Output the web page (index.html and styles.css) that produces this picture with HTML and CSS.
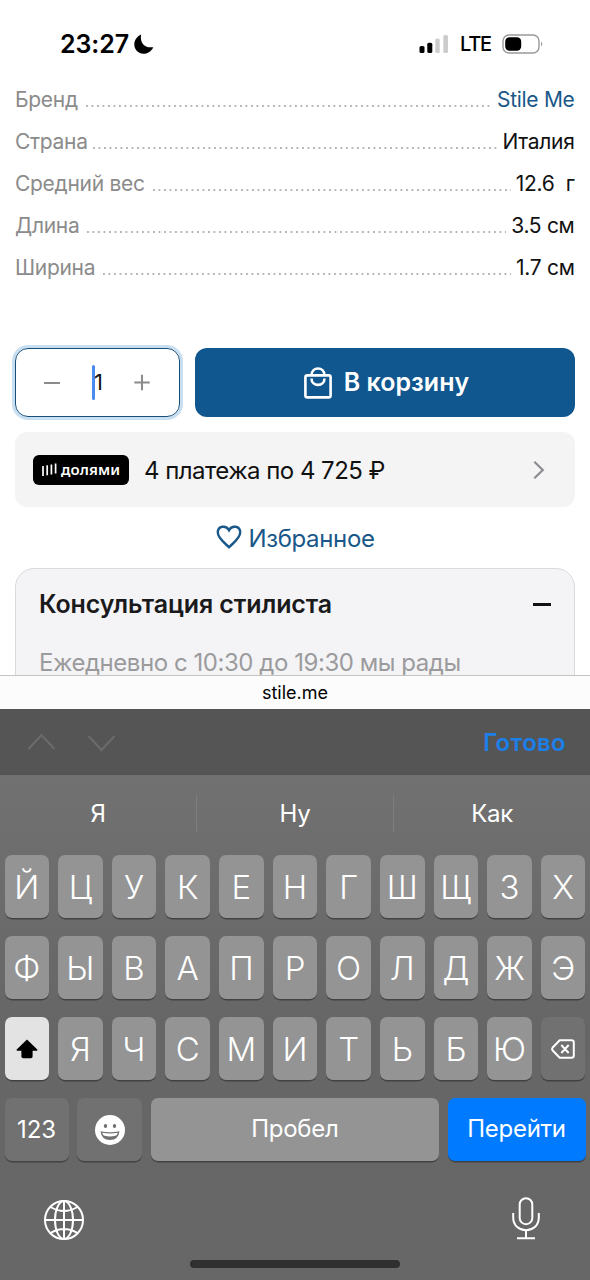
FILE: index.html
```html
<!DOCTYPE html>
<html lang="ru">
<head>
<meta charset="utf-8">
<title>Stile Me</title>
<link rel="stylesheet" href="styles.css">
</head>
<body>
<header class="status">
  <span class="clock">23:27</span>
  <svg class="moon" width="20" height="22" viewBox="0 0 20 22"><path d="M7.2 1.4C5.8 7.8 8.9 15.5 19.3 14.2C17 19 12.8 20.8 9.4 20.8C4.2 20.8 .3 16.5 .3 11.3C.3 6.9 3.2 3 7.2 1.4Z"/></svg>
  <svg class="signal" width="30" height="20" viewBox="0 0 30 20"><rect x="0.5" y="12" width="5" height="7" rx="1.6"/><rect x="8.3" y="8.7" width="5" height="10.3" rx="1.6"/><g fill="#ccc"><rect x="16.3" y="4.5" width="4.4" height="14.5" rx="1.6"/><rect x="24.3" y="1" width="4.7" height="18" rx="1.6"/></g></svg>
  <span class="network">LTE</span>
  <svg class="battery" width="42" height="20" viewBox="0 0 42 20"><rect x="1" y="1" width="36" height="18" rx="6" fill="none" stroke="#999" stroke-width="1.4"/><rect x="3.2" y="3.2" width="16" height="13.6" rx="4.2"/><path d="M39 7.5Q41.5 10 39 12.5Z" fill="#999"/></svg>
</header>
<main class="page">
  <dl class="specs">
    <div class="spec"><dt>Бренд</dt><i class="dots"></i><dd class="brand">Stile Me</dd></div>
    <div class="spec"><dt>Страна</dt><i class="dots near"></i><dd>Италия</dd></div>
    <div class="spec"><dt>Средний вес</dt><i class="dots"></i><dd>12.6&nbsp; г</dd></div>
    <div class="spec"><dt>Длина</dt><i class="dots"></i><dd>3.5 см</dd></div>
    <div class="spec"><dt>Ширина</dt><i class="dots"></i><dd>1.7 см</dd></div>
  </dl>
  <div class="buy">
    <div class="qty">
      <svg width="18" height="18" viewBox="0 0 18 18"><path d="M1 9H17"/></svg>
      <span class="amount"><i class="caret"></i>1</span>
      <svg width="18" height="18" viewBox="0 0 18 18"><path d="M1.3 8.5H16.7M9 .8V16.2"/></svg>
    </div>
    <button class="cart">
      <svg width="28" height="32" viewBox="0 0 28 32"><rect x="1.4" y="8.4" width="25.2" height="22" rx="2"/><path d="M7.5 8.4C7.5-.8 20.5-.8 20.5 8.4M7.5 11.5C7.5 20 20.5 20 20.5 11.5"/></svg>
      <span>В корзину</span>
    </button>
  </div>
  <div class="split">
    <span class="dolyame"><svg width="15" height="14" viewBox="0 0 15 14"><path d="M1 3V13M5.2 2.2V12.2M9.4 1.4V11.4M13.6 .6V10.6"/></svg><span>долями</span></span>
    <span class="split-text">4 платежа по 4 725 ₽</span>
    <svg class="more" width="12" height="20" viewBox="0 0 12 20"><path d="M1.3 1.8L9.8 10L1.3 18.2"/></svg>
  </div>
  <div class="favorite">
    <svg width="26" height="24" viewBox="0 0 26 24"><path d="M13 22.2C9.5 18.7 1.8 13.5 1.8 7.6C1.8 .7 10 -.2 13 5.2C16-.2 24.2 .7 24.2 7.6C24.2 13.5 16.5 18.7 13 22.2Z"/></svg>
    <span>Избранное</span>
  </div>
  <section class="stylist">
    <div class="stylist-head"><h2>Консультация стилиста</h2><i class="minus"></i></div>
    <p>Ежедневно с 10:30 до 19:30 мы рады</p>
  </section>
</main>
<div class="address">stile.me</div>
<div class="accessory">
  <svg width="90" height="20" viewBox="0 0 90 20"><path d="M1.5 17L14.5 3L27.5 17M61.5 4L74.5 18L87.5 4"/></svg>
  <span>Готово</span>
</div>
<div class="keyboard">
  <div class="suggest"><span>Я</span><span>Ну</span><span>Как</span></div>
  <div class="row"><b>Й</b><b>Ц</b><b>У</b><b>К</b><b>Е</b><b>Н</b><b>Г</b><b>Ш</b><b>Щ</b><b>З</b><b>Х</b></div>
  <div class="row"><b>Ф</b><b>Ы</b><b>В</b><b>А</b><b>П</b><b>Р</b><b>О</b><b>Л</b><b>Д</b><b>Ж</b><b>Э</b></div>
  <div class="row">
    <b class="shift"><svg width="24" height="22" viewBox="0 0 24 22"><path d="M12 1.4L22.3 11.5Q23 12.8 21.5 12.8H17.6V18.5Q17.6 20.3 15.8 20.3H8.2Q6.4 20.3 6.4 18.5V12.8H2.5Q1 12.8 1.7 11.5Z"/></svg></b>
    <b>Я</b><b>Ч</b><b>С</b><b>М</b><b>И</b><b>Т</b><b>Ь</b><b>Б</b><b>Ю</b>
    <b class="dark"><svg class="line" width="24" height="20" viewBox="0 0 24 20"><path d="M8.7 1.2H20.5Q22.8 1.2 22.8 3.5V16.5Q22.8 18.8 20.5 18.8H8.7L1.7 11.5Q.5 10 1.7 8.5ZM10.3 6L17.7 14M17.7 6L10.3 14"/></svg></b>
  </div>
  <div class="row bottom">
    <b class="dark num">123</b>
    <b class="dark"><svg width="30" height="30" viewBox="0 0 30 30"><circle cx="15" cy="15" r="15" fill="#fff"/><ellipse cx="10.5" cy="11" rx="1.7" ry="2.1" fill="#717171"/><ellipse cx="19.5" cy="11" rx="1.7" ry="2.1" fill="#717171"/><path d="M5.5 16.3Q15 18.3 24.5 16.3Q23.5 25 15 25Q6.5 25 5.5 16.3Z" fill="#717171"/><path d="M7.2 17.8Q15 19.2 22.8 17.8Q22.2 20.4 20.5 20.8Q15 22 9.5 20.8Q7.8 20.4 7.2 17.8Z" fill="#fff"/></svg></b>
    <b class="space">Пробел</b>
    <b class="go">Перейти</b>
  </div>
  <div class="system">
    <svg class="line" width="40" height="40" viewBox="0 0 40 40"><circle cx="20" cy="20" r="19"/><ellipse cx="20" cy="20" rx="9" ry="19"/><path d="M20 1V39M1 20H39M6.5 7Q20 15 33.5 7M6.5 33Q20 25 33.5 33"/></svg>
    <svg class="line mic" width="28" height="43" viewBox="0 0 28 43"><rect x="7.7" y="1.2" width="12.6" height="26" rx="6.3"/><path d="M1.2 16V20.5C1.2 37.5 26.8 37.5 26.8 20.5V16M14 33.5V41.3M5 41.3H23"/></svg>
  </div>
  <div class="home"></div>
</div>
</body>
</html>
```
FILE: styles.css
```css
* { box-sizing: border-box; }
body { margin: 0; width: 590px; height: 1280px; overflow: hidden; background: #fff; color: #111; font-family: Inter, "Liberation Sans", sans-serif; }
svg { display: block; flex: none; }
.status { height: 79px; padding: 9px 46px 0 60px; display: flex; align-items: center; color: #000; }
.clock { width: 70px; font-size: 25px; font-weight: 600; letter-spacing: -.1px; white-space: nowrap; }
.moon { margin-left: 4px; }
.signal { margin-left: auto; }
.network { width: 31px; margin: 0 11px; font-size: 20px; font-weight: 500; letter-spacing: -1.2px; }
.page { height: 596px; padding: 0 15px; overflow: hidden; }
.specs { margin: 0; }
.spec { height: 42px; display: flex; align-items: center; font-size: 21px; line-height: 42px; letter-spacing: -.3px; white-space: nowrap; }
.spec dt { color: #8b8b8b; }
.spec dd { margin: 0 .5px 0 0; }
.spec .brand { color: #195889; }
.dots { flex: 1; height: 2px; margin: 11px 5px 0 8px; background: radial-gradient(circle at 1px 1px, #b5b5b5 .9px, transparent 1.1px) 0 0 / 5.5px 2px repeat-x; }
.dots.near { margin-left: 5px; }
.buy { display: flex; gap: 15px; height: 69px; margin-top: 59px; }
.qty { width: 165px; border: 1.5px solid #164f7c; border-radius: 13px; box-shadow: 0 0 0 3px #c9dff0; display: flex; justify-content: space-between; align-items: center; padding: 0 28px 0 27px; }
.qty svg { fill: none; stroke: #8b8b8b; stroke-width: 2; }
.amount { display: flex; align-items: center; font-size: 22px; line-height: 35px; margin-top: -1px; letter-spacing: -1px; }
.caret { width: 3px; height: 35px; margin-right: -1px; border-radius: 2px; background: #478af0; }
.cart { flex: 1; border: 0; border-radius: 12px; background: #10578f; color: #fff; display: flex; align-items: center; justify-content: center; gap: 12px; font: 600 25px Inter, sans-serif; padding: 0 0 0 3px; }
.cart svg { fill: none; stroke: #fff; stroke-width: 2.6; }
.cart span { margin-top: -1px; }
.split { height: 75px; margin-top: 15px; padding: 0 30px 0 18px; background: #f4f4f4; border-radius: 12px; display: flex; align-items: center; }
.dolyame { width: 96px; height: 30px; border-radius: 6px; background: #000; color: #fff; display: flex; align-items: center; justify-content: center; gap: 4px; font: 600 15px "Noto Sans", sans-serif; letter-spacing: .1px; }
.dolyame span { margin-top: -2px; }
.dolyame svg { fill: none; stroke: #fff; stroke-width: 1.7; }
.split-text { margin: 1px 0 0 15px; font-size: 24px; letter-spacing: -.53px; white-space: nowrap; }
.more { margin-left: auto; fill: none; stroke: #8c8c92; stroke-width: 2.2; }
.favorite { height: 61px; padding: 1px 0 0 1px; display: flex; align-items: center; justify-content: center; gap: 6px; font-size: 24px; letter-spacing: -.35px; color: #195889; }
.favorite svg { fill: none; stroke: currentColor; stroke-width: 2.4; margin-top: -2px; }
.stylist { height: 140px; border: 1px solid #dadadc; border-radius: 19px 19px 0 0; background: #f4f4f6; padding: 0 23px; white-space: nowrap; }
.stylist-head { height: 70px; display: flex; align-items: center; justify-content: space-between; }
.stylist h2 { margin: 0; font-size: 25px; font-weight: 600; letter-spacing: -.12px; color: #1a1a1c; }
.minus { width: 18px; height: 3px; background: #111; }
.stylist p { margin: 12px 0 0; font-size: 24px; line-height: 24px; letter-spacing: -.45px; color: #9b9b9d; }
.address { height: 34px; border-top: 1px solid #c4c4c4; background: #fcfcfc; color: #000; text-align: center; font-size: 18px; line-height: 34px; }
.accessory { height: 66px; padding: 0 24px 0 27px; display: flex; align-items: center; justify-content: space-between; background: #555; color: #1c7fe8; font-size: 24px; font-weight: 600; letter-spacing: .3px; }
.accessory svg { fill: none; stroke: #6b6b6b; stroke-width: 2; }
.keyboard { height: 505px; padding: 0 4.5px; background: linear-gradient(#717171, #666 50%, #676767); color: #fff; }
.suggest { height: 80px; margin: 0 -4.5px; display: flex; align-items: center; font-size: 24px; letter-spacing: -.3px; }
.suggest span { flex: 1; height: 37px; line-height: 38px; text-align: center; margin-top: -4px; }
.suggest span + span { border-left: 1px solid #7e7e7e; }
.row { height: 63px; display: grid; grid-template-columns: repeat(11, 1fr); gap: 9.2px; margin-bottom: 18.1px; }
.row b { min-width: 0; display: flex; align-items: center; justify-content: center; border-radius: 7px; background: #949494; box-shadow: 0 1.4px 0 #424242; font-size: 33px; font-weight: 350; }
.row .dark { background: #717171; }
.row .shift { background: #e3e3e3; }
.shift svg { fill: #000; }
.line { fill: none; stroke: #fff; stroke-width: 2; stroke-linejoin: round; }
.bottom { grid-template-columns: 64px 65px 1fr 138px; gap: 8.8px; }
.row .num, .row .space, .row .go { font-size: 24px; font-weight: 400; }
.row .space, .row .go { padding-bottom: 3px; letter-spacing: -.3px; }
.row .go { background: #007aff; }
.system { height: 64px; margin: 24px 0 11px; padding: 6px 45.5px 0 39px; display: flex; align-items: center; justify-content: space-between; }
.mic { margin-top: -3px; }
.home { width: 210px; height: 7.5px; margin: 0 auto; border-radius: 4px; background: #303030; }
```
